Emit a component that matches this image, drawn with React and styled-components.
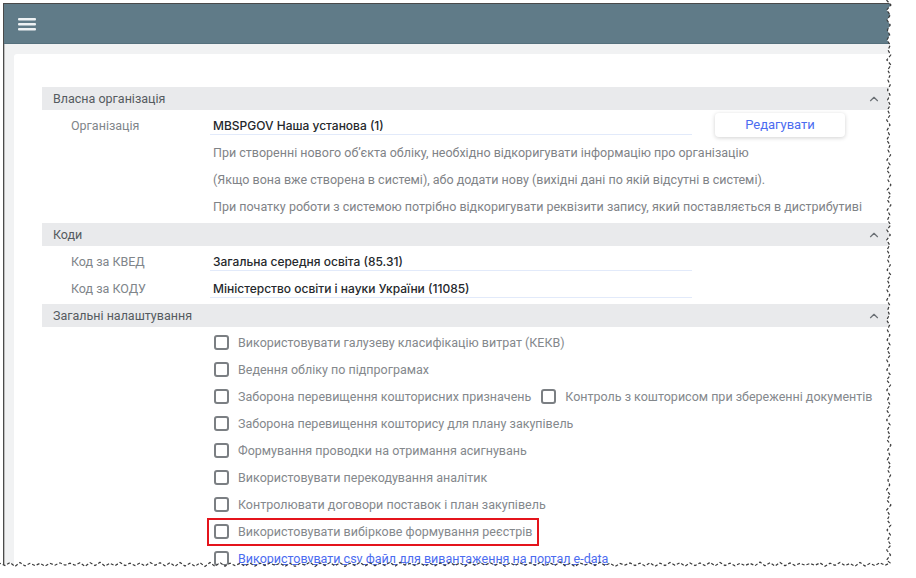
import { createGlobalStyle, styled } from "styled-components";
import { ChevronUp } from "lucide-react";

const GlobalStyle = createGlobalStyle`
  html, body {
    margin: 0;
    padding: 0;
    background: #fff;
  }
  body {
    font-family: Roboto, "Noto Sans", "Liberation Sans", sans-serif;
    font-size: 12.5px;
  }
`;

const Page = styled.div`
  position: relative;
  width: 916px;
  height: 578px;
  padding: 3px 0 0 3px;
  box-sizing: border-box;
  overflow: hidden;
`;

const Window = styled.div`
  width: 887px;
  height: 562px;
  border-left: 1px solid #4a4a4a;
  border-top: 1px solid #4a4a4a;
  box-shadow: inset 1px 0 0 #bdbdbd;
  overflow: hidden;
  display: flex;
  flex-direction: column;
  background: #f1f2f3;
`;

const TopBar = styled.div`
  height: 39px;
  flex-shrink: 0;
  background: #607b88;
  border-bottom: 1px solid #55707d;
  display: flex;
  align-items: center;
  padding-left: 13px;
`;

const Body = styled.div`
  flex: 1;
  padding: 10px 0 0 10px;
  display: flex;
`;

const Card = styled.div`
  flex: 1;
  background: #fff;
  border-radius: 3px 0 0 0;
  padding: 33px 0 0 28px;
`;

const Section = styled.div`
  width: 847px;
  padding-bottom: ${(p) => p.$pb || 2}px;
`;

const SectionHead = styled.div`
  height: 23px;
  background: #e9eaec;
  display: flex;
  align-items: center;
  justify-content: space-between;
  padding: 0 8px 0 11px;
  color: #555b60;
  font-size: 12.5px;
  margin-bottom: 2px;
`;

const Row = styled.div`
  height: 27px;
  display: flex;
  align-items: center;
  white-space: nowrap;
`;

const Label = styled.div`
  width: 142px;
  padding-left: 29px;
  color: #80858a;
  flex-shrink: 0;
`;

const Field = styled.div`
  width: 482px;
  height: 27px;
  display: flex;
  align-items: center;
  padding-left: 3px;
  margin-left: -3px;
  box-sizing: border-box;
  color: #25282c;
  font-family: Inter, Roboto, sans-serif;
  font-size: 12px;
  font-weight: 500;
  position: relative;
  &::after {
    content: "";
    position: absolute;
    left: 0;
    right: 0;
    bottom: 4px;
    height: 1.5px;
    background: #e2eafa;
  }
`;

const EditButton = styled.button`
  margin-left: 23px;
  width: 130px;
  height: 24px;
  border: none;
  border-radius: 4px;
  background: #fff;
  box-shadow: 0 1px 4px rgba(0, 0, 0, 0.18);
  color: #4b6cf0;
  font-family: inherit;
  font-size: 13px;
  font-weight: 400;
  margin-top: -2px;
`;

const Info = styled.div`
  padding-left: 171px;
  color: #7f8387;
`;

const Options = styled.div`
  padding-left: 171px;
`;

const Option = styled.label`
  position: relative;
  height: 27px;
  display: inline-flex;
  align-items: center;
  gap: 9px;
  margin-right: 9px;
  color: ${(p) => (p.$link ? "#4b6cf0" : "#84888c")};
  text-decoration: ${(p) => (p.$link ? "underline" : "none")};
  &::after {
    content: "";
    display: ${(p) => (p.$highlight ? "block" : "none")};
    position: absolute;
    left: -6px;
    right: -7px;
    top: 0;
    bottom: -1px;
    border: 2px solid #e4141c;
  }
`;

const Box = styled.span`
  width: 15px;
  height: 15px;
  box-sizing: border-box;
  border: 2px solid #7b7f83;
  border-radius: 3px;
  flex-shrink: 0;
  margin-left: 1px;
`;

const EdgeSvg = styled.svg`
  position: absolute;
  left: 0;
  top: 0;
  pointer-events: none;
`;

const Menu = () => (
  <svg width="20" height="16" viewBox="0 0 20 16">
    <rect x="1" y="2" width="18" height="2.4" rx="1" fill="#eef2f4" />
    <rect x="1" y="7" width="18" height="2.4" rx="1" fill="#eef2f4" />
    <rect x="1" y="12" width="18" height="2.4" rx="1" fill="#eef2f4" />
  </svg>
);

function jag(i) {
  const r = Math.sin(i * 12.9898) * 43758.5453;
  return r - Math.floor(r);
}

function tornEdge() {
  const right = [];
  for (let y = 0, i = 0; y <= 563; y += 5, i++) {
    right.push([887 + (i % 2 ? 2.5 : -0.5) + jag(i) * 1.5, y]);
  }
  const bottom = [];
  for (let x = 890, i = 0; x >= 0; x -= 5, i++) {
    bottom.push([x, 563 + (i % 2 ? 2 : -1) + jag(i + 200) * 1.5]);
  }
  const pts = [...right, ...bottom];
  const line = pts.map((p, k) => `${k ? "L" : "M"}${p[0].toFixed(1)} ${p[1].toFixed(1)}`).join(" ");
  const fill = `${line} L0 578 L916 578 L916 0 Z`;
  return { line, fill };
}

const edge = tornEdge();

const settings = [
  [{ text: "Використовувати галузеву класифікацію витрат (КЕКВ)" }],
  [{ text: "Ведення обліку по підпрограмах" }],
  [
    { text: "Заборона перевищення кошторисних призначень" },
    { text: "Контроль з кошторисом при збереженні документів" },
  ],
  [{ text: "Заборона перевищення кошторису для плану закупівель" }],
  [{ text: "Формування проводки на отримання асигнувань" }],
  [{ text: "Використовувати перекодування аналітик" }],
  [{ text: "Контролювати договори поставок і план закупівель" }],
  [{ text: "Використовувати вибіркове формування реєстрів", highlight: true }],
  [{ text: "Використовувати csv файл для вивантаження на портал e-data", link: true }],
];

const Head = ({ children }) => (
  <SectionHead>
    {children}
    <ChevronUp size={14} color="#6b7075" strokeWidth={2} />
  </SectionHead>
);

export default function App() {
  return (
    <Page>
      <GlobalStyle />
      <Window>
        <TopBar>
          <Menu />
        </TopBar>
        <Body>
          <Card>
            <Section $pb={3}>
              <Head>Власна організація</Head>
              <Row>
                <Label>Організація</Label>
                <Field>MBSPGOV Наша установа (1)</Field>
                <EditButton>Редагувати</EditButton>
              </Row>
              <Row>
                <Info>При створенні нового об’єкта обліку, необхідно відкоригувати інформацію про організацію</Info>
              </Row>
              <Row>
                <Info>(Якщо вона вже створена в системі), або додати нову (вихідні дані по якій відсутні в системі).</Info>
              </Row>
              <Row>
                <Info>При початку роботи з системою потрібно відкоригувати реквізити запису, який поставляється в дистрибутиві</Info>
              </Row>
            </Section>
            <Section>
              <Head>Коди</Head>
              <Row>
                <Label>Код за КВЕД</Label>
                <Field>Загальна середня освіта (85.31)</Field>
              </Row>
              <Row>
                <Label>Код за КОДУ</Label>
                <Field>Міністерство освіти і науки України (11085)</Field>
              </Row>
            </Section>
            <Section>
              <Head>Загальні налаштування</Head>
              <Options>
                {settings.map((row, i) => (
                  <Row key={i}>
                    {row.map((o) => (
                      <Option key={o.text} $highlight={o.highlight} $link={o.link}>
                        <Box />
                        {o.text}
                      </Option>
                    ))}
                  </Row>
                ))}
              </Options>
            </Section>
          </Card>
        </Body>
      </Window>
      <EdgeSvg width="916" height="578" viewBox="0 0 916 578">
        <path d={edge.fill} fill="#fff" />
        <path d={edge.line} fill="none" stroke="#3a3a3a" strokeWidth="1.2" strokeDasharray="3 2" />
      </EdgeSvg>
    </Page>
  );
}
